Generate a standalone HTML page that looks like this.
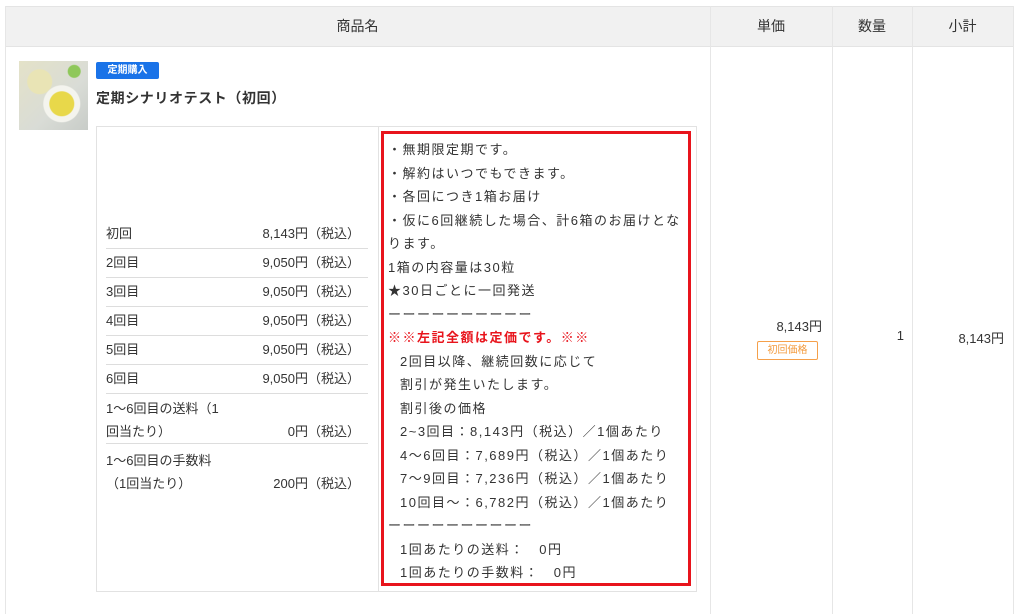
<!DOCTYPE html>
<html><head><meta charset="utf-8"><style>
*{margin:0;padding:0;box-sizing:border-box}
body{width:1024px;height:614px;background:#fff;font-family:"Liberation Sans","Noto Sans CJK JP",sans-serif;color:#333;font-size:13px;position:relative;overflow:hidden}
.a{position:absolute}
.hd{top:6px;height:41px;background:#f1f1f1;border-top:1px solid #e4e4e4;border-bottom:1px solid #e4e4e4;line-height:40px;text-align:center;font-size:14px}
.vl{position:absolute;top:6px;bottom:0;width:1px;background:#e6e6e6}
.row{position:absolute;left:106px;width:262px;height:29px;border-bottom:1px solid #ddd;line-height:28px}
.row span{position:absolute;right:8px;top:0}
.rb{left:381px;top:131px;width:310px;height:455px;border:3px solid #e8141c;padding:4px 0 0 4px;line-height:23.5px;font-size:13px;letter-spacing:1.5px;white-space:nowrap}
</style></head><body>
<div class="a hd" style="left:5px;width:1008px"></div>
<div class="a" style="left:5px;top:6px;width:705px;line-height:41px;text-align:center;font-size:14px">商品名</div>
<div class="a" style="left:710px;top:6px;width:122px;line-height:41px;text-align:center;font-size:14px">単価</div>
<div class="a" style="left:832px;top:6px;width:80px;line-height:41px;text-align:center;font-size:14px">数量</div>
<div class="a" style="left:912px;top:6px;width:101px;line-height:41px;text-align:center;font-size:14px">小計</div>
<div class="vl" style="left:5px"></div><div class="vl" style="left:710px"></div><div class="vl" style="left:832px"></div><div class="vl" style="left:912px"></div><div class="vl" style="left:1013px"></div>
<div class="a" style="left:19px;top:61px;width:69px;height:69px;background:radial-gradient(circle at 62% 62%,#e8d84a 0 12px,#f4f4ee 13px 18px,transparent 19px),radial-gradient(circle at 30% 30%,#e9e4b5 0 12px,transparent 13px),radial-gradient(circle at 80% 15%,#8fc85a 0 6px,transparent 7px),linear-gradient(135deg,#e4e2c8,#d9dcd6 60%,#c8ccc8)"></div>
<div class="a" style="left:96px;top:62px;width:63px;height:17px;background:#1a73e8;border-radius:2px;color:#fff;font-size:10px;font-weight:bold;text-align:center;line-height:17px">定期購入</div>
<div class="a" style="left:96px;top:88px;font-size:14px;font-weight:bold;line-height:20px;letter-spacing:0.6px">定期シナリオテスト（初回）</div>
<div class="a" style="left:96px;top:126px;width:601px;height:466px;border:1px solid #e2e2e2"></div>
<div class="a" style="left:378px;top:126px;width:1px;height:466px;background:#e2e2e2"></div>
<div class="row" style="top:220px">初回<span>8,143円（税込）</span></div>
<div class="row" style="top:249px">2回目<span>9,050円（税込）</span></div>
<div class="row" style="top:278px">3回目<span>9,050円（税込）</span></div>
<div class="row" style="top:307px">4回目<span>9,050円（税込）</span></div>
<div class="row" style="top:336px">5回目<span>9,050円（税込）</span></div>
<div class="row" style="top:365px">6回目<span>9,050円（税込）</span></div>
<div class="row" style="top:394px;height:50px;line-height:23px;padding-top:3px">1〜6回目の送料（1<br>回当たり）<span style="top:26px;line-height:23px">0円（税込）</span></div>
<div class="row" style="top:444px;height:50px;line-height:23px;padding-top:5px;border:none">1〜6回目の手数料<br>（1回当たり）<span style="top:28px;line-height:23px">200円（税込）</span></div>
<div class="a rb">・無期限定期です。<br>・解約はいつでもできます。<br>・各回につき1箱お届け<br>・仮に6回継続した場合、計6箱のお届けとな<br>ります。<br>1箱の内容量は30粒<br>★30日ごとに一回発送<br>ーーーーーーーーーー<br><b style="color:#e8141c">※※左記全額は定価です。※※</b><div style="padding-left:12px">2回目以降、継続回数に応じて<br>割引が発生いたします。<br>割引後の価格<br>2~3回目：8,143円（税込）／1個あたり<br>4〜6回目：7,689円（税込）／1個あたり<br>7〜9回目：7,236円（税込）／1個あたり<br>10回目〜：6,782円（税込）／1個あたり</div>ーーーーーーーーーー<div style="padding-left:12px">1回あたりの送料：　0円<br>1回あたりの手数料：　0円</div></div>
<div class="a" style="left:710px;top:316px;width:112px;text-align:right">8,143円</div>
<div class="a" style="left:757px;top:341px;width:61px;height:19px;border:1px solid #f5a04a;border-radius:2px;color:#f39a3c;font-size:10px;text-align:center;line-height:17px">初回価格</div>
<div class="a" style="left:832px;top:328px;width:72px;text-align:right">1</div>
<div class="a" style="left:912px;top:328px;width:92px;text-align:right">8,143円</div>
</body></html>
